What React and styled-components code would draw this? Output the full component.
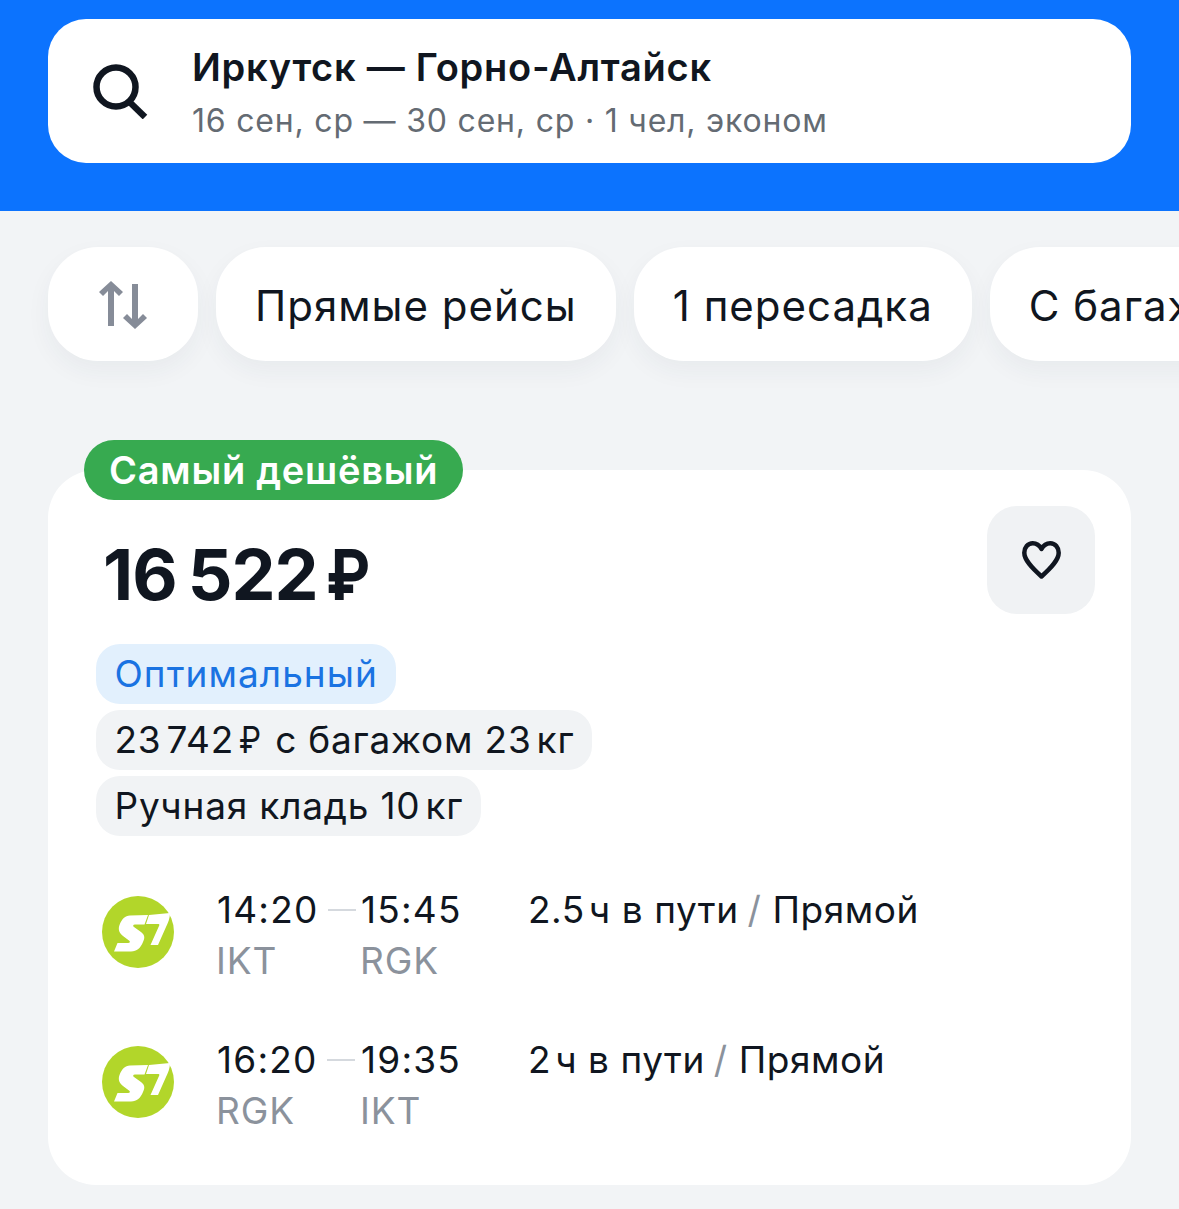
import styled, { createGlobalStyle } from "styled-components";

const GlobalStyle = createGlobalStyle`
  html, body {
    margin: 0;
    padding: 0;
    background: #f2f4f6;
  }
  body {
    font-family: Inter, "Noto Sans", sans-serif;
    color: #101620;
  }
`;

const Page = styled.div`
  width: 1179px;
  height: 1209px;
  overflow: hidden;
  background: #f2f4f6;
`;

const Header = styled.header`
  height: 211px;
  box-sizing: border-box;
  padding: 19px 48px 0;
  background: #0c73fe;
`;

const SearchBox = styled.div`
  height: 144px;
  display: flex;
  align-items: center;
  gap: 44px;
  padding-left: 44px;
  background: #fff;
  border-radius: 38px;
`;

const SearchText = styled.div`
  display: flex;
  flex-direction: column;
  gap: 13px;
  padding-top: 2px;
`;

const Route = styled.div`
  font-size: 38px;
  line-height: 44px;
  font-weight: 600;
  letter-spacing: 0.75px;
`;

const Dates = styled.div`
  font-size: 32px;
  line-height: 38px;
  color: #646b73;
  letter-spacing: 0.8px;
`;

const Filters = styled.div`
  display: flex;
  gap: 18px;
  padding: 36px 0 40px 48px;
  overflow: hidden;
`;

const Pill = styled.div`
  flex: none;
  height: 114px;
  box-sizing: border-box;
  padding: 2px ${(p) => p.$pad || 39}px 0;
  display: flex;
  align-items: center;
  background: #fff;
  border-radius: 50px;
  font-size: 42px;
  letter-spacing: 1px;
  box-shadow: 0 10px 24px rgba(40, 50, 70, 0.05);
`;

const Card = styled.section`
  position: relative;
  margin: 69px 48px 0;
  height: 715px;
  box-sizing: border-box;
  padding: 66px 48px 0;
  background: #fff;
  border-radius: 48px;
`;

const Badge = styled.div`
  position: absolute;
  left: 36px;
  top: -30px;
  height: 60px;
  padding: 0 25px;
  display: flex;
  align-items: center;
  background: #37aa50;
  border-radius: 30px;
  color: #fff;
  font-size: 38px;
  font-weight: 600;
  letter-spacing: 0.75px;
`;

const FavButton = styled.div`
  position: absolute;
  right: 36px;
  top: 36px;
  width: 108px;
  height: 108px;
  display: flex;
  align-items: center;
  justify-content: center;
  background: #f0f2f4;
  border-radius: 30px;
`;

const Price = styled.div`
  margin-left: 7px;
  height: 76px;
  display: flex;
  align-items: center;
  font-size: 70px;
  font-weight: 700;
  letter-spacing: -1px;
`;

const Gap = styled.span`
  display: inline-block;
  width: ${(p) => p.$w}px;
`;

const Ruble = styled.span`
  display: inline-block;
  margin-right: ${(p) => p.$cut || 0}px;
  transform: scaleX(0.85);
  transform-origin: left center;
`;

const Tags = styled.div`
  margin-top: 32px;
  display: flex;
  flex-direction: column;
  align-items: flex-start;
  gap: 6px;
`;

const Tag = styled.div`
  height: 60px;
  padding: 0 18px 1px 18.5px;
  box-sizing: border-box;
  display: flex;
  align-items: center;
  white-space: pre;
  border-radius: 24px;
  font-size: 37px;
  letter-spacing: ${(p) => (p.$blue ? 1.05 : 0.8)}px;
  background: ${(p) => (p.$blue ? "#e2f0fd" : "#f1f3f5")};
  color: ${(p) => (p.$blue ? "#1a73e2" : "#101620")};
`;

const Flights = styled.div`
  margin-top: 49px;
  display: flex;
  flex-direction: column;
  gap: 40px;
`;

const Flight = styled.div`
  display: flex;
  align-items: flex-start;
  height: 110px;
`;

const Logo = styled.svg`
  flex: none;
  width: 72px;
  height: 72px;
  margin: 11px 43px 0 6px;
`;

const Point = styled.div`
  width: ${(p) => p.$w}px;
  flex: none;
  display: flex;
  flex-direction: column;
`;

const Time = styled.div`
  display: flex;
  align-items: center;
  font-size: 37px;
  line-height: 50px;
  letter-spacing: 1.2px;
`;

const Dash = styled.span`
  width: 28px;
  height: 2px;
  margin-left: 9px;
  background: #d5d9de;
`;

const Code = styled.div`
  margin-left: -1px;
  font-size: 37px;
  line-height: 52px;
  color: #8b929c;
  letter-spacing: 0.9px;
`;

const Duration = styled.div`
  margin-left: -1px;
  font-size: 37px;
  line-height: 50px;
  letter-spacing: 0.55px;
`;

const Slash = styled.span`
  margin-left: -2px;
  color: #8b929c;
`;

function SearchIcon() {
  return (
    <svg width="56" height="56" viewBox="0 0 56 56" fill="none" stroke="#101620" strokeWidth="6.5">
      <circle cx="24" cy="24" r="19.5" />
      <path d="M37 38.5 L53 54" />
    </svg>
  );
}

function SortIcon() {
  return (
    <svg width="50" height="50" viewBox="0 0 50 50" fill="#868c98">
      <path d="M10 46V11L5 16 1 12 13 1 25 12 21 16 16 11V46Z" />
      <path d="M34 4V39L29 34 25 38 37 49 49 38 45 34 40 39V4Z" />
    </svg>
  );
}

function HeartIcon() {
  return (
    <svg width="39" height="38" viewBox="0 0 39 38" fill="none" stroke="#101620" strokeWidth="4.5" strokeLinejoin="round">
      <path d="M19.5 8C17 3.5 13.5 2.3 10.8 2.3 5.8 2.3 2.3 6.5 2.3 11.8 2.3 19 9.5 26.5 19.5 35.5 29.5 26.5 36.7 19 36.7 11.8 36.7 6.5 33.2 2.3 28.2 2.3 25.5 2.3 22 3.5 19.5 8Z" />
    </svg>
  );
}

function S7Logo() {
  return (
    <Logo viewBox="0 0 72 72">
      <circle cx="36" cy="36" r="36" fill="#b2d62a" />
      <path
        fill="#fff"
        d="M28 19.5L46 19 42.5 28.5H33C31 28.5 30.5 30 32 31L39 36C43 39 43 42 41 46C38.5 52 35 55.5 29 55.5H12L15.5 47H26C28 47 28.5 45.5 27 44.5L21 40C17 37 16 33 17.5 29C20 23 23 19.5 28 19.5Z"
      />
      <path fill="#fff" d="M47 19L68 17C68 22 66 27 64 31L56 49H48.5L57 30C58 28.5 57 28 56 28H44Z" />
    </Logo>
  );
}

const flights = [
  { from: "14:20", to: "15:45", a: "IKT", b: "RGK", hours: "2.5", rest: "ч в пути" },
  { from: "16:20", to: "19:35", a: "RGK", b: "IKT", hours: "2", rest: "ч в пути" },
];

export default function App() {
  return (
    <Page>
      <GlobalStyle />
      <Header>
        <SearchBox>
          <SearchIcon />
          <SearchText>
            <Route>Иркутск — Горно-Алтайск</Route>
            <Dates>16 сен, ср — 30 сен, ср · 1 чел, эконом</Dates>
          </SearchText>
        </SearchBox>
      </Header>

      <Filters>
        <Pill $pad={50}>
          <SortIcon />
        </Pill>
        <Pill>Прямые рейсы</Pill>
        <Pill>1 пересадка</Pill>
        <Pill>С багажом</Pill>
      </Filters>

      <Card>
        <Badge>Самый дешёвый</Badge>
        <FavButton>
          <HeartIcon />
        </FavButton>
        <Price>
          16<Gap $w={11} />522<Gap $w={8} />
          <Ruble>₽</Ruble>
        </Price>
        <Tags>
          <Tag $blue>Оптимальный</Tag>
          <Tag>
            23<Gap $w={5} />742<Gap $w={5} />
            <Ruble $cut={-2}>₽</Ruble> с багажом 23<Gap $w={5} />кг
          </Tag>
          <Tag>
            Ручная кладь 10<Gap $w={5} />кг
          </Tag>
        </Tags>
        <Flights>
          {flights.map((f) => (
            <Flight key={f.from}>
              <S7Logo />
              <Point $w={144}>
                <Time>
                  {f.from}
                  <Dash />
                </Time>
                <Code>{f.a}</Code>
              </Point>
              <Point $w={168}>
                <Time>{f.to}</Time>
                <Code>{f.b}</Code>
              </Point>
              <Duration>
                {f.hours}
                <Gap $w={4} />
                {f.rest} <Slash>/</Slash> Прямой
              </Duration>
            </Flight>
          ))}
        </Flights>
      </Card>
    </Page>
  );
}
